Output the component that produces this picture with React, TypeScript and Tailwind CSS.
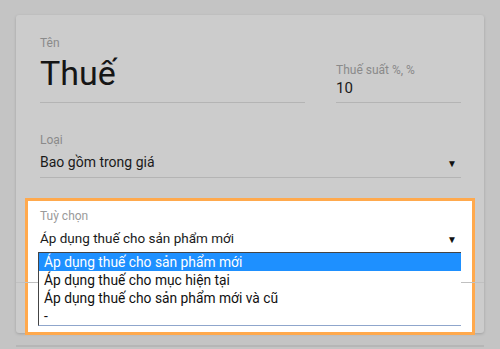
import React from 'react';

const font = { fontFamily: 'Roboto, "Noto Sans", sans-serif' };

function Caret() {
  return <span className="relative top-[2px] mr-[4px] text-[10px] leading-none text-[#111]">▼</span>;
}

const options = [
  'Áp dụng thuế cho sản phẩm mới',
  'Áp dụng thuế cho mục hiện tại',
  'Áp dụng thuế cho sản phẩm mới và cũ',
  '-',
];

export default function App() {
  return (
    <div className="w-[500px] h-[349px] overflow-hidden bg-[#c4c4c4] pt-[15px] px-[16px]" style={font}>
      <div className="relative h-[318px] rounded-[3px] bg-[#cccccc] shadow-[0_1px_3px_rgba(0,0,0,0.18)] pt-[20px] pl-[24px] pr-[23px]">
        {/* name + rate */}
        <div className="flex items-end">
          <div className="w-[265px] border-b border-[#b4b4b4] pb-[8px]">
            <div className="text-[12px] leading-[16px] text-[#8a8a8a]">Tên</div>
            <div className="text-[34px] leading-[41px] text-[#151515] mt-[2px]">Thuế</div>
          </div>
          <div className="ml-[31px] flex-1 border-b border-[#b4b4b4] pb-[4px]">
            <div className="text-[12px] leading-[16px] text-[#8a8a8a]">Thuế suất %, %</div>
            <div className="text-[15px] leading-[20px] text-[#1a1a1a]">10</div>
          </div>
        </div>

        {/* type */}
        <div className="mt-[29px] border-b border-[#b4b4b4] pb-[5px]">
          <div className="text-[12px] leading-[16px] text-[#8a8a8a]">Loại</div>
          <div className="flex items-center justify-between mt-[4px] h-[20px]">
            <span className="text-[14px] leading-[20px] text-[#1a1a1a]">Bao gồm trong giá</span>
            <Caret />
          </div>
        </div>

        {/* divider through the card */}
        <div className="absolute left-0 right-0 top-[267px] h-px bg-[#c0c0c0] z-10" />

        {/* highlighted option field */}
        <div className="-ml-[15px] -mr-[14px] mt-[20px] h-[137px] border-[3px] border-[#ffa94d] bg-white pl-[12px] pr-[11px] pt-[7px]">
          <div className="text-[12px] leading-[16px] text-[#9a9a9a]">Tuỳ chọn</div>
          <div className="flex items-center justify-between mt-[4px] h-[20px]">
            <span className="text-[13.5px] leading-[20px] text-[#1a1a1a]">Áp dụng thuế cho sản phẩm mới</span>
            <Caret />
          </div>
          <div className="relative z-20 mt-[4px] -ml-[2px] bg-white border-l border-t border-[#444] border-b border-b-[#8fa6cc]">
            {options.map((o, i) => (
              <div
                key={o}
                className={
                  i === 0
                    ? 'h-[18px] pl-[5px] text-[13.8px] leading-[18px] bg-[#1e90ff] text-white'
                    : 'h-[18px] pl-[5px] text-[13.8px] leading-[18px] text-[#111]'
                }
              >
                {o}
              </div>
            ))}
          </div>
        </div>
      </div>
      <div className="mt-[12px] h-[2px] bg-[#b6b6b6]" />
    </div>
  );
}
